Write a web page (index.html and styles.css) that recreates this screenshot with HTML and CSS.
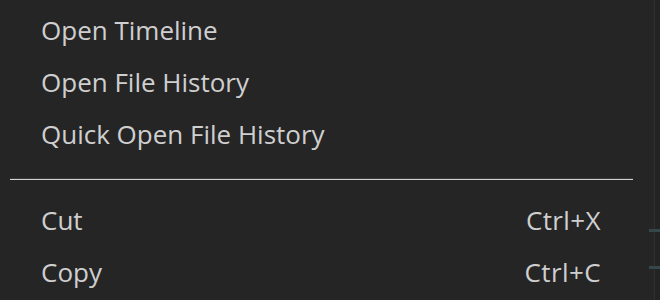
FILE: index.html
```html
<!DOCTYPE html>
<html>
<head>
<meta charset="utf-8">
<link rel="stylesheet" href="styles.css">
</head>
<body>
<div class="screen">
  <div class="menu">
    <div class="item"><span class="label">Open Timeline</span></div>
    <div class="item"><span class="label">Open File History</span></div>
    <div class="item"><span class="label">Quick Open File History</span></div>
    <div class="separator"></div>
    <div class="item"><span class="label">Cut</span><span class="key">Ctrl+X</span></div>
    <div class="item"><span class="label">Copy</span><span class="key">Ctrl+C</span></div>
  </div>
  <div class="edge"></div>
  <span class="mark mark-a"></span>
  <span class="mark mark-b"></span>
</div>
</body>
</html>
```
FILE: styles.css
```css
html, body {
  margin: 0;
  padding: 0;
  background: #252526;
}
.screen {
  width: 660px;
  height: 300px;
  display: flex;
  overflow: hidden;
  position: relative;
}
.menu {
  width: 654px;
  padding-top: 4px;
  font-family: "Open Sans", "Noto Sans", sans-serif;
  font-size: 26px;
  color: #cfcfcf;
}
.item {
  height: 52px;
  line-height: 52px;
  display: flex;
  justify-content: space-between;
  padding-left: 41px;
  padding-right: 53px;
}
.key {
  letter-spacing: 0.4px;
}
.separator {
  margin: 19px 21px 14px 10px;
  height: 1px;
  background: #d2d2d2;
  box-shadow: 0 -1px 0 #3a3a3b;
}
.edge {
  width: 5px;
  border-left: 1px solid #303031;
  background: #232324;
}
.mark {
  position: absolute;
  left: 649px;
  right: 0;
  height: 3px;
  background: #34474b;
}
.mark-a { top: 229px; }
.mark-b { top: 266px; }
```
